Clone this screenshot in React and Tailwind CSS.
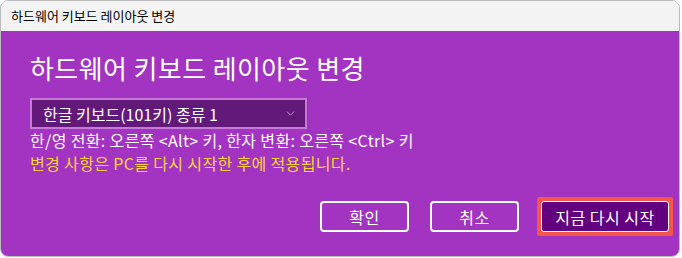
import React from 'react';
import { ChevronDown } from 'lucide-react';

const font = { fontFamily: '"Noto Sans CJK KR", "Noto Sans", sans-serif' };

export default function App() {
  return (
    <div className="w-[682px] h-[258px] bg-white" style={font}>
      <div className="w-[680px] h-[257px] rounded-lg border border-[#bcbcbc] overflow-hidden flex flex-col">
        {/* title bar */}
        <div className="h-[30px] shrink-0 bg-[#f3f3f3] flex items-center px-[10px] text-[13px] text-black">
          하드웨어 키보드 레이아웃 변경
        </div>

        {/* body */}
        <div className="flex-1 bg-[#a333c1] flex flex-col pl-[29px] pr-[6px] pt-[21px]">
          <h1 className="text-[26px] leading-[32px] tracking-[0.4px] text-white">하드웨어 키보드 레이아웃 변경</h1>

          <div className="mt-[14px] w-[277px] h-[31px] border-2 border-[#c57ad8] bg-[#62197a] flex items-center justify-between pl-[11px] pr-[8px] text-white text-[16px]">
            <span>한글 키보드(101키) 종류 1</span>
            <ChevronDown size={13} strokeWidth={1.5} className="text-[#d9b8e2]" />
          </div>

          <div className="text-[16px] leading-[23px] tracking-[0.35px]">
            <p className="text-white">한/영 전환: 오른쪽 &lt;Alt&gt; 키, 한자 변환: 오른쪽 &lt;Ctrl&gt; 키</p>
            <p className="text-[#ffd43b]">변경 사항은 PC를 다시 시작한 후에 적용됩니다.</p>
          </div>

          <div className="mt-[22px] flex justify-end items-center text-[16px] tracking-[0.5px] text-white">
            <button className="w-[89px] h-[31px] rounded-[4px] border-2 border-white">확인</button>
            <button className="ml-[21px] w-[89px] h-[31px] rounded-[4px] border-2 border-white">취소</button>
            <div className="ml-[18px] p-[4px] bg-[#f5564a] rounded-[2px]">
              <button className="w-[128px] h-[31px] rounded-[3px] border border-white bg-[#630080] block">지금 다시 시작</button>
            </div>
          </div>
        </div>
      </div>
    </div>
  );
}
